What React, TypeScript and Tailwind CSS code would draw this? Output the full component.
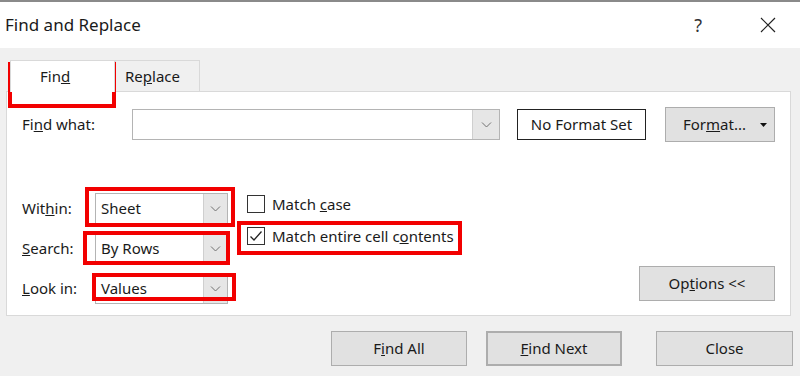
import React from "react";

const font = { fontFamily: '"Segoe UI", "Noto Sans", "Open Sans", sans-serif' };

function Chevron() {
  return (
    <svg width="11" height="6" viewBox="0 0 11 6" fill="none">
      <path d="M1 0.5l4.5 4.5 4.5-4.5" stroke="#707070" strokeWidth="1" />
    </svg>
  );
}

function Select({ value }: { value: string }) {
  return (
    <div className="flex h-[31px] w-[133px] border border-[#b4b4b4] bg-white">
      <div className="flex flex-1 items-center pl-[5px] text-[15px] text-[#1a1a1a]">{value}</div>
      <div className="flex w-[24px] items-center justify-center border-l border-[#cfcfcf] bg-[#e6e6e6]">
        <Chevron />
      </div>
    </div>
  );
}

function Check({ checked, children }: { checked?: boolean; children: React.ReactNode }) {
  return (
    <div className="flex items-center gap-[7px] text-[15px] text-[#1a1a1a]">
      <div className="flex h-[18px] w-[18px] items-center justify-center border border-[#333] bg-white">
        {checked && (
          <svg width="14" height="12" viewBox="0 0 14 12" fill="none">
            <path d="M1.5 6.5l3.5 3.5 7.5-8.5" stroke="#222" strokeWidth="1.3" />
          </svg>
        )}
      </div>
      <span>{children}</span>
    </div>
  );
}

function Btn({ children, className = "" }: { children: React.ReactNode; className?: string }) {
  return (
    <div
      className={`flex h-[35px] items-center justify-center border border-[#adadad] bg-[#e1e1e1] text-[15px] text-[#1a1a1a] ${className}`}
    >
      {children}
    </div>
  );
}

function RedBox({ className }: { className: string }) {
  return <div className={`pointer-events-none absolute border-[4px] border-[#f20000] ${className}`} />;
}

export default function App() {
  return (
    <div className="relative h-[376px] w-[800px] overflow-hidden border-t-2 border-[#8a8a8a] bg-[#f0f0f0]" style={font}>
      {/* title bar */}
      <div className="flex h-[46px] items-center bg-white pl-[5px] pr-[24px]">
        <span className="text-[17px] text-[#1a1a1a]">Find and Replace</span>
        <span className="ml-auto mr-[58px] text-[18px] text-[#333]">?</span>
        <svg width="16" height="16" viewBox="0 0 16 16" fill="none">
          <path d="M1 1l14 14M15 1L1 15" stroke="#222" strokeWidth="1.2" />
        </svg>
      </div>

      {/* tabs */}
      <div className="mt-[12px] flex h-[31px] items-end pl-[10px]">
        <div className="relative z-10 -mb-px flex h-[32px] w-[105px] items-center border border-b-0 border-[#d9d9d9] bg-white pl-[29px] text-[15px] text-[#1a1a1a]">
          Fin<u>d</u>
        </div>
        <div className="flex h-[31px] w-[85px] items-center border border-b-0 border-[#d9d9d9] bg-[#f0f0f0] pl-[9px] text-[15px] text-[#1a1a1a]">
          Re<u>p</u>lace
        </div>
      </div>

      {/* tab panel */}
      <div className="mx-[6px] flex h-[225px] w-[785px] flex-col border border-[#d9d9d9] bg-white px-[15px] pb-[11px] pt-[15px]">
        <div className="flex items-center">
          <span className="w-[110px] text-[15px] text-[#1a1a1a]">
            Fi<u>n</u>d what:
          </span>
          <div className="flex h-[31px] w-[368px] border border-[#b4b4b4] bg-white">
            <div className="flex-1" />
            <div className="flex w-[27px] items-center justify-center border-l border-[#cfcfcf] bg-[#e6e6e6]">
              <Chevron />
            </div>
          </div>
          <div className="ml-[17px] flex h-[31px] w-[129px] items-center justify-center border border-[#222] text-[15px] text-[#1a1a1a]">
            No Format Set
          </div>
          <Btn className="ml-[19px] h-[29px] w-[110px] gap-[14px] pl-[10px]">
            <span>
              For<u>m</u>at...
            </span>
            <svg width="7" height="4" viewBox="0 0 7 4">
              <path d="M0 0h7L3.5 4z" fill="#111" />
            </svg>
          </Btn>
        </div>

        <div className="mt-auto flex items-end">
          <div className="flex flex-col gap-[9px]">
            {[
              [<>Wit<u>h</u>in:</>, "Sheet"],
              [<><u>S</u>earch:</>, "By Rows"],
              [<><u>L</u>ook in:</>, "Values"],
            ].map(([label, value], i) => (
              <div key={i} className="flex items-center">
                <span className="w-[73px] text-[15px] text-[#1a1a1a]">{label}</span>
                <Select value={value as string} />
              </div>
            ))}
          </div>
          <div className="mb-[57px] ml-[19px] flex flex-col gap-[9px]">
            <Check>
              Match <u>c</u>ase
            </Check>
            <Check checked>
              Match entire cell c<u>o</u>ntents
            </Check>
          </div>
          <Btn className="mb-[3px] ml-auto w-[136px]">
            <span>
              Op<u>t</u>ions &lt;&lt;
            </span>
          </Btn>
        </div>
      </div>

      {/* bottom buttons */}
      <div className="mt-[15px] flex pl-[331px]">
        <Btn className="w-[136px]">
          <span>
            F<u>i</u>nd All
          </span>
        </Btn>
        <Btn className="ml-[19px] w-[136px] border-2 border-[#0078d7]">
          <span>
            <u>F</u>ind Next
          </span>
        </Btn>
        <Btn className="ml-[34px] w-[137px]">Close</Btn>
      </div>

      {/* annotation boxes */}
      <RedBox className="left-[8px] top-[60px] h-[46px] w-[108px]" />
      <RedBox className="left-[85px] top-[185px] h-[40px] w-[150px]" />
      <RedBox className="left-[83px] top-[229px] h-[34px] w-[147px]" />
      <RedBox className="left-[92px] top-[271px] h-[28px] w-[144px]" />
      <RedBox className="left-[237px] top-[219px] h-[34px] w-[225px]" />
    </div>
  );
}
